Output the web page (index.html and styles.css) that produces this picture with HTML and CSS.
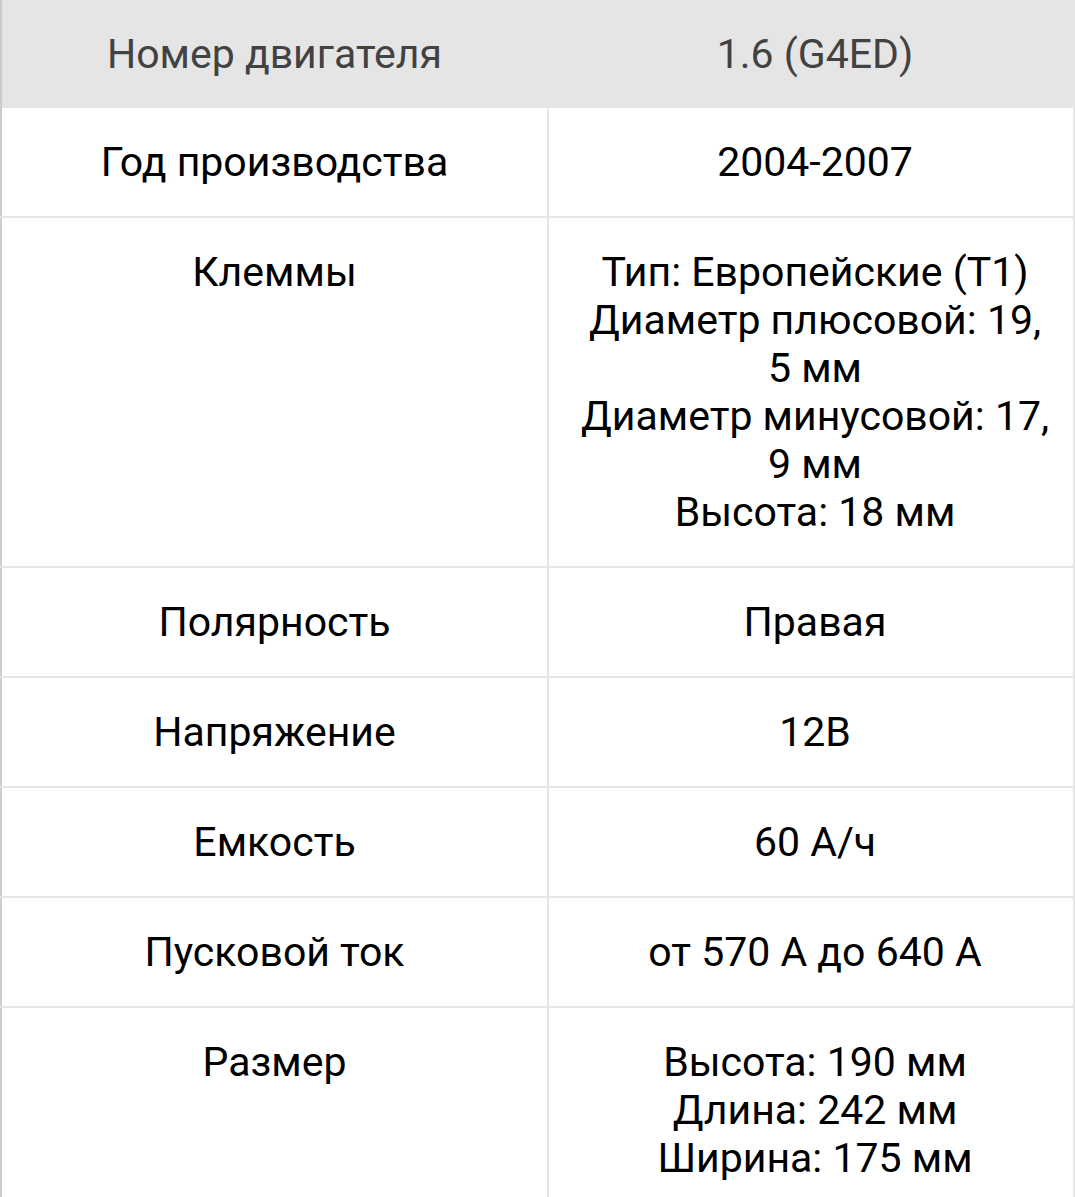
FILE: index.html
```html
<!DOCTYPE html>
<html lang="ru">
<head>
<meta charset="utf-8">
<title>Аккумулятор</title>
<link rel="stylesheet" href="styles.css">
</head>
<body>
<table class="spec">
  <colgroup>
    <col class="col-key">
    <col class="col-val">
  </colgroup>
  <thead>
    <tr>
      <th class="cell cell-key">Номер двигателя</th>
      <th class="cell cell-val">1.6 (G4ED)</th>
    </tr>
  </thead>
  <tbody>
    <tr>
      <td class="cell cell-key">Год производства</td>
      <td class="cell cell-val">2004-2007</td>
    </tr>
    <tr>
      <td class="cell cell-key">Клеммы</td>
      <td class="cell cell-val">Тип: Европейские (Т1)<br>Диаметр плюсовой: 19, 5 мм<br>Диаметр минусовой: 17, 9 мм<br>Высота: 18 мм</td>
    </tr>
    <tr>
      <td class="cell cell-key">Полярность</td>
      <td class="cell cell-val">Правая</td>
    </tr>
    <tr>
      <td class="cell cell-key">Напряжение</td>
      <td class="cell cell-val">12В</td>
    </tr>
    <tr>
      <td class="cell cell-key">Емкость</td>
      <td class="cell cell-val">60 А/ч</td>
    </tr>
    <tr>
      <td class="cell cell-key">Пусковой ток</td>
      <td class="cell cell-val">от 570 А до 640 А</td>
    </tr>
    <tr>
      <td class="cell cell-key">Размер</td>
      <td class="cell cell-val">Высота: 190 мм<br>Длина: 242 мм<br>Ширина: 175 мм</td>
    </tr>
  </tbody>
</table>
</body>
</html>
```

FILE: styles.css
```css
html, body {
  margin: 0;
  padding: 0;
  background: #ffffff;
}

.spec {
  width: 100%;
  border-collapse: collapse;
  table-layout: fixed;
  font-family: Roboto, "Noto Sans", sans-serif;
  font-size: 41px;
  line-height: 48px;
  color: #000000;
  border-left: 2px solid #cccccc;
}

.col-key {
  width: 547px;
}

.cell {
  padding: 30px 22px;
  text-align: center;
  vertical-align: top;
  font-weight: 400;
  border: 2px solid #e6e6e6;
  border-left-width: 0;
}

.cell-val {
  border-left-width: 2px;
  padding-left: 27px;
  padding-right: 19px;
}

.spec thead .cell {
  background: #e5e5e5;
  color: #424242;
  border-top: 0;
  border-bottom: 0;
}

.spec tbody tr:first-child .cell {
  border-top: 0;
}
```
